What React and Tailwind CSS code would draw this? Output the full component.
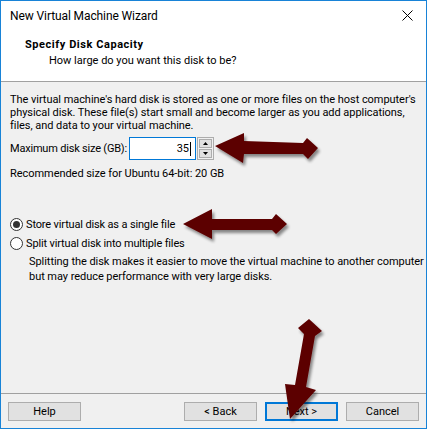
import React from "react";

function Radio({ checked }) {
  return (
    <span className="relative inline-flex w-[13px] h-[13px] rounded-full border border-[#333333] bg-white items-center justify-center shrink-0">
      {checked && <span className="w-[7px] h-[7px] rounded-full bg-[#333333]" />}
    </span>
  );
}

function Btn({ children, focused }) {
  return (
    <div
      className={
        "w-[73px] h-[19px] flex items-center justify-center bg-[#e1e1e1] text-[11px] leading-none text-black " +
        (focused ? "border-2 border-[#0078d7]" : "border border-[#adadad]")
      }
    >
      {children}
    </div>
  );
}

export default function App() {
  return (
    <div
      className="relative w-[428px] h-[430px] bg-white"
      style={{ fontFamily: '"Segoe UI", Roboto, "Noto Sans", sans-serif' }}
    >
      <div className="w-[427px] h-[429px] border border-[#1883d7] flex flex-col bg-[#f0f0f0]">
        {/* Title bar */}
        <div className="h-[29px] bg-white flex items-center justify-between pl-[9px] pr-[13px]">
          <span className="text-[12px] text-black tracking-[-0.1px]">New Virtual Machine Wizard</span>
          <svg width="11" height="11" viewBox="0 0 11 11">
            <path d="M0.5 0.5 L10.5 10.5 M10.5 0.5 L0.5 10.5" stroke="#000" strokeWidth="1" />
          </svg>
        </div>
        {/* Header */}
        <div className="h-[52px] bg-white border-b border-[#a0a0a0] pt-[8px] text-[11px] leading-[13px] text-black whitespace-nowrap">
          <div className="pl-[24px] font-bold tracking-[0.55px]">Specify Disk Capacity</div>
          <div className="pl-[48px] mt-[3px]">How large do you want this disk to be?</div>
        </div>
        {/* Body */}
        <div className="flex-1 flex flex-col px-[9px] pt-[11px] text-[11px] leading-[13px] text-black whitespace-nowrap tracking-[-0.05px]">
          <p>
            The virtual machine's hard disk is stored as one or more files on the host computer's
            <br />
            physical disk. These file(s) start small and become larger as you add applications,
            <br />
            files, and data to your virtual machine.
          </p>
          <div className="flex items-center mt-[5px] h-[23px]">
            <span className="w-[119px] shrink-0 tracking-[-0.2px]">Maximum disk size (GB):</span>
            <div className="w-[67px] h-[23px] border border-[#0078d7] bg-white flex items-center justify-end pr-[4px]">
              <span>35</span>
              <span className="w-px h-[14px] bg-black ml-px" />
            </div>
            <div className="w-[17px] h-[23px] border border-[#adadad] flex flex-col ml-px p-px gap-px bg-[#f0f0f0]">
              <div className="flex-1 bg-[#e1e1e1] border border-[#adadad] flex items-center justify-center">
                <svg width="5" height="3" viewBox="0 0 5 3"><path d="M2.5 0 L5 3 L0 3 Z" fill="#000" /></svg>
              </div>
              <div className="flex-1 bg-[#e1e1e1] border border-[#adadad] flex items-center justify-center">
                <svg width="5" height="3" viewBox="0 0 5 3"><path d="M0 0 L5 0 L2.5 3 Z" fill="#000" /></svg>
              </div>
            </div>
          </div>
          <p className="mt-[7px]">Recommended size for Ubuntu 64-bit: 20 GB</p>
          <div className="flex items-center gap-[3px] mt-[37px] h-[14px]">
            <Radio checked />
            <span className="tracking-[-0.15px]">Store virtual disk as a single file</span>
          </div>
          <div className="flex items-center gap-[3px] mt-[5px] h-[14px]">
            <Radio />
            <span className="tracking-[-0.15px]">Split virtual disk into multiple files</span>
          </div>
          <p className="pl-[19px] mt-[4px] leading-[15px] tracking-[-0.05px]">
            Splitting the disk makes it easier to move the virtual machine to another computer
            <br />
            but may reduce performance with very large disks.
          </p>
          <div className="flex-1" />
        </div>
        {/* Footer */}
        <div className="h-[35px] border-t border-[#a0a0a0] flex items-start pt-[8px] px-[7px]">
          <Btn>Help</Btn>
          <div className="flex-1" />
          <div className="flex gap-[8px]">
            <Btn>&lt; Back</Btn>
            <Btn focused>Next &gt;</Btn>
            <Btn>Cancel</Btn>
          </div>
        </div>
      </div>

      {/* Annotation arrows */}
      <svg className="absolute left-0 top-0 pointer-events-none" width="428" height="430" viewBox="0 0 428 430">
        <defs>
          <filter id="sh" x="-20%" y="-20%" width="140%" height="140%">
            <feGaussianBlur in="SourceAlpha" stdDeviation="1.5" />
            <feOffset dx="2" dy="3" result="b" />
            <feComponentTransfer><feFuncA type="linear" slope="0.45" /></feComponentTransfer>
            <feMerge>
              <feMergeNode />
              <feMergeNode in="SourceGraphic" />
            </feMerge>
          </filter>
        </defs>
        <g fill="#5c0003" filter="url(#sh)">
          <polygon points="215,146 244,133 244,141 303,143 307,138 318,148 308,159 303,154 244,154 243,163" />
          <polygon points="183,224 212,209 212,219 272,219 276,214 287,224 276,234 272,230 212,230 212,239" />
          <polygon points="309,319 322,331 315,336 306,387 316,390 290,419 285,384 295,385 304,334 298,328" />
        </g>
      </svg>
    </div>
  );
}
